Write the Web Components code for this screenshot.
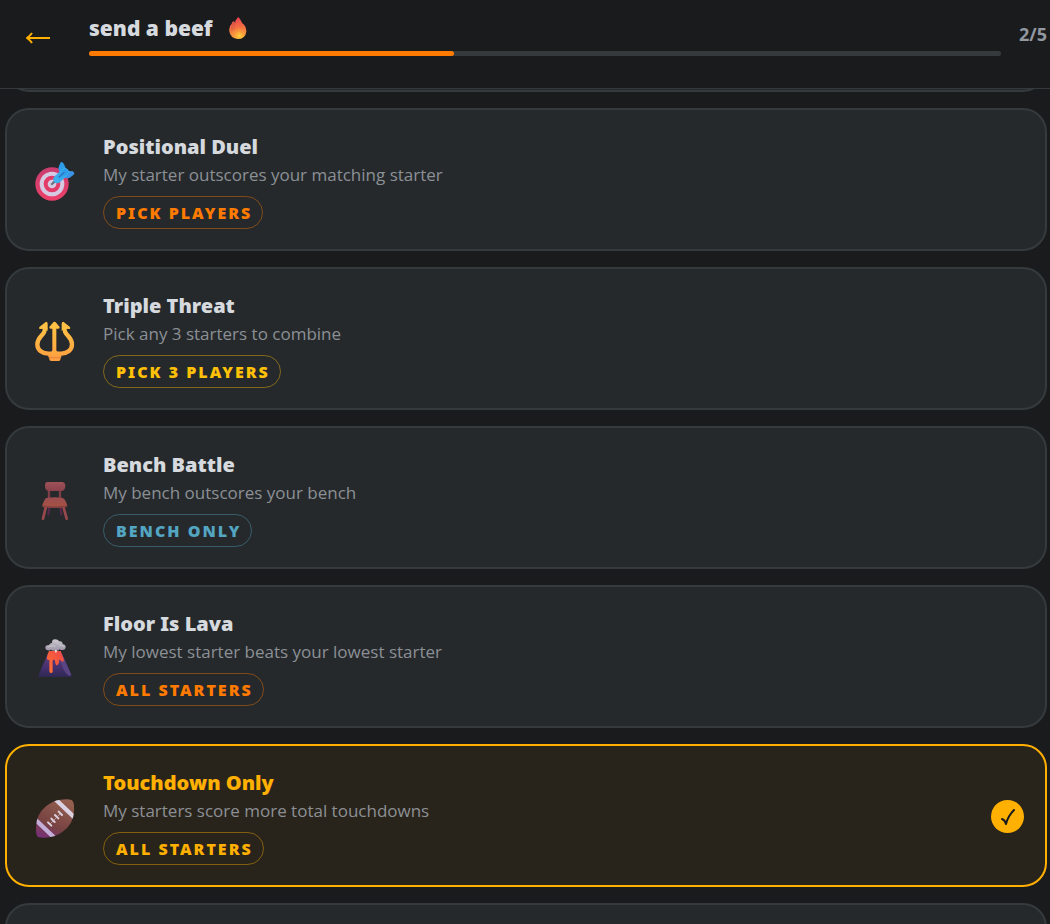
<!DOCTYPE html>
<html lang="en">
<head>
<meta charset="utf-8">
<meta name="viewport" content="width=device-width, initial-scale=1">
<title>send a beef</title>
<style>
	:root {
		--bg: #1a1b1d;
		--surface: #25292c;
		--line: #353b3d;
		--text: #d6dade;
		--muted: #8c9095;
		--orange: #ff7b00;
		--amber: #ffb000;
		--yellow: #ffc107;
		--blue: #53a5c2;
		--heading-font: "Noto Sans", "Open Sans", sans-serif;
	}

	body {
		margin: 0;
		background: var(--bg);
		color: var(--text);
		font-family: "Open Sans", "Noto Sans", sans-serif;
	}
</style>
</head>
<body>
<beef-wizard>
	<step-header slot="header" step="2" total="5">send a beef</step-header>
	<challenge-card></challenge-card>
	<challenge-card icon="target">
		Positional Duel
		<span slot="description">My starter outscores your matching starter</span>
		<tag-pill slot="tag" tone="orange">PICK PLAYERS</tag-pill>
	</challenge-card>
	<challenge-card icon="trident">
		Triple Threat
		<span slot="description">Pick any 3 starters to combine</span>
		<tag-pill slot="tag" tone="yellow">PICK 3 PLAYERS</tag-pill>
	</challenge-card>
	<challenge-card icon="chair">
		Bench Battle
		<span slot="description">My bench outscores your bench</span>
		<tag-pill slot="tag" tone="blue">BENCH ONLY</tag-pill>
	</challenge-card>
	<challenge-card icon="volcano">
		Floor Is Lava
		<span slot="description">My lowest starter beats your lowest starter</span>
		<tag-pill slot="tag" tone="orange">ALL STARTERS</tag-pill>
	</challenge-card>
	<challenge-card icon="football" selected>
		Touchdown Only
		<span slot="description">My starters score more total touchdowns</span>
		<tag-pill slot="tag" tone="amber">ALL STARTERS</tag-pill>
	</challenge-card>
	<challenge-card></challenge-card>
</beef-wizard>

<script>
const ICONS = {
	target: `
		<defs>
			<linearGradient id="dart" x1="0" y1="1" x2="1" y2="0"><stop stop-color="#47b9ef"/><stop offset="1" stop-color="#2594e6"/></linearGradient>
			<linearGradient id="ring" x1="0" y1="0" x2="0" y2="1"><stop stop-color="#c93d70"/><stop offset="1" stop-color="#ed4069"/></linearGradient>
		</defs>
		<circle cx="51" cy="66" r="50" fill="url(#ring)"/>
		<circle cx="51" cy="66" r="37" fill="#d6c9e2"/>
		<circle cx="51" cy="66" r="25" fill="#e23b68"/>
		<circle cx="51" cy="66" r="13" fill="#d6c9e2"/>
		<path d="M51 66L62 56" stroke="#68717f" stroke-width="7" stroke-linecap="round"/>
		<path d="M71 15L77 1Q82-2 87 7L93 20L84 38Q68 30 71 15Z" fill="#2f9de8"/>
		<path d="M86 36L97 26L113 28Q121 32 116 38L104 47Q93 52 82 44Z" fill="#3a93e6"/>
		<path d="M58 45L82 23Q90 17 97 22Q104 30 97 38L74 60Q65 66 59 60Q53 52 58 45Z" fill="url(#dart)" stroke="#3fb0ee" stroke-width="3"/>
		<path d="M73 45L87 32" stroke="#2775bd" stroke-width="4" stroke-linecap="round"/>`,
	trident: `
		<defs><linearGradient id="gold" gradientUnits="userSpaceOnUse" x1="0" y1="0" x2="0" y2="120"><stop stop-color="#ffc846"/><stop offset="1" stop-color="#ff9e3f"/></linearGradient></defs>
		<g fill="none" stroke="url(#gold)" stroke-width="13" stroke-linejoin="round">
			<path d="M29 15C35 43 7 43 7 70C7 88 21 97 39 98H79C97 97 111 88 111 70C111 43 83 43 89 15"/>
			<path d="M58 14V100" stroke-width="12"/>
			<path d="M45 99Q55 94 58 82Q61 94 72 99Z" fill="#ffa842" stroke-width="5"/>
		</g>
		<path d="M33 2Q38 2 38 8V30L31 23L14 24Q10 21 14 17ZM85 2Q80 2 80 8V30L87 23L104 24Q108 21 104 17ZM58 2Q61 2 64 6L74 18Q75 23 70 23H47Q42 23 43 18L53 6Q56 2 58 2Z" fill="#ffc045"/>
		<path d="M40 102H79V108Q76 111 76 116Q75 120 70 120H49Q43 120 43 115Q43 111 40 108Z" fill="#ffa140"/>
		<path d="M42 110H77" stroke="#e78340" stroke-width="3"/>`,
	chair: `
		<defs>
			<linearGradient id="seat" x1="0" y1="0" x2="0" y2="1"><stop stop-color="#9c4c51"/><stop offset="1" stop-color="#a55340"/></linearGradient>
			<linearGradient id="back" x1="0" y1="0" x2="0" y2="1"><stop stop-color="#9e5358"/><stop offset="1" stop-color="#8b414c"/></linearGradient>
		</defs>
		<path d="M43 81L40 104M76 81L79 104" stroke="#55294a" stroke-width="6" stroke-linecap="round"/>
		<path d="M42 28V60M75 28V60" stroke="#7c3f48" stroke-width="7"/>
		<path d="M33 80L24 116M85 80L95 116" stroke="#99494e" stroke-width="8" stroke-linecap="round"/>
		<path d="M36 6H83Q90 7 91 15Q91 29 84 32Q79 34 59 33Q38 34 34 31Q29 25 30 14Q31 7 36 6Z" fill="url(#back)"/>
		<path d="M35 54Q59 50 83 54Q88 55 92 64L97 76Q97 82 88 82Q59 85 30 82Q20 81 22 74L29 59Q31 55 35 54Z" fill="url(#seat)"/>
		<path d="M23 75Q26 80 32 80Q59 82 88 80Q94 80 96 75" fill="none" stroke="#7d3843" stroke-width="3"/>`,
	volcano: `
		<defs>
			<linearGradient id="rock" x1="0" y1="0" x2="0" y2="1"><stop stop-color="#65407d"/><stop offset=".6" stop-color="#45306f"/><stop offset="1" stop-color="#2d2852"/></linearGradient>
			<linearGradient id="lava" x1="0" y1="1" x2="1" y2="0"><stop stop-color="#ff7431"/><stop offset="1" stop-color="#ed4548"/></linearGradient>
			<linearGradient id="smoke" x1="0" y1="0" x2="0" y2="1"><stop stop-color="#c9c6cc"/><stop offset="1" stop-color="#9c95a8"/></linearGradient>
		</defs>
		<path d="M39 43H80L109 107Q112 114 104 114H15Q8 114 12 105Z" fill="url(#rock)"/>
		<path d="M77 67Q84 100 103 111L109 107L84 52Z" fill="#5a4483"/>
		<path d="M42 36H77Q84 53 87 64Q86 69 81 68Q76 64 73 61Q72 78 66 79Q61 79 60 65Q54 57 53 69V98Q52 103 47 102Q43 101 43 96V63Q39 63 36 61Q34 55 42 36Z" fill="url(#lava)"/>
		<path d="M57 30H68L63 43Z" fill="#fff1ec"/>
		<path d="M39 34Q31 34 31 25Q32 18 42 18Q45 12 51 12Q50 1 60 1Q69 1 73 7Q83 6 83 16Q93 17 92 26Q90 34 81 33Q76 34 74 31Q68 37 61 33Q54 38 48 32Q44 35 39 34Z" fill="url(#smoke)"/>
		<path d="M40 24Q52 17 60 23M60 8Q67 8 70 15M74 19Q81 17 86 22" fill="none" stroke="#d5d1d8" stroke-width="4" stroke-linecap="round" opacity=".5"/>`,
	football: `
		<defs>
			<linearGradient id="leather" x1=".7" y1="0" x2=".2" y2="1"><stop stop-color="#95604f"/><stop offset=".65" stop-color="#784342"/><stop offset="1" stop-color="#783077"/></linearGradient>
			<linearGradient id="stripe" x1="1" y1="0" x2="0" y2="1"><stop stop-color="#e6e3e6"/><stop offset="1" stop-color="#b79bd4"/></linearGradient>
			<clipPath id="ball"><path d="M76 5Q101 1 111 7Q119 14 117 40Q116 78 82 102Q57 120 25 119Q10 119 6 114Q2 106 3 88Q4 49 33 25Q52 8 76 5Z"/></clipPath>
		</defs>
		<g clip-path="url(#ball)">
			<rect width="120" height="120" fill="url(#leather)"/>
			<path d="M57 0L123 63M-4 60L64 125" stroke="url(#stripe)" stroke-width="13"/>
		</g>
		<path d="M39 73L49 83M49 62L59 72M60 51L70 61M71 41L81 51" stroke="#ddd2df" stroke-width="6" stroke-linecap="round"/>
		<path d="M45 78L77 46" stroke="#c8b7c8" stroke-width="2"/>`
};

customElements.define('beef-wizard', class extends HTMLElement {
	constructor() {
		super();
		this.attachShadow({ mode: 'open' }).innerHTML = `
			<style>
				:host {
					display: flex;
					flex-direction: column;
					height: 100vh;
				}

				main {
					flex: 1;
					min-height: 0;
					overflow-y: auto;
					scrollbar-width: none;
				}

				.list {
					display: flex;
					flex-direction: column;
					gap: 16px;
					padding: 16px 3px 16px 5px;
				}
			</style>
			<slot name="header"></slot>
			<main><div class="list"><slot></slot></div></main>
		`;
	}
});

customElements.define('step-header', class extends HTMLElement {
	constructor() {
		super();
		this.attachShadow({ mode: 'open' });
	}

	connectedCallback() {
		const
			step = Number(this.getAttribute('step')),
			total = Number(this.getAttribute('total'));
		this.shadowRoot.innerHTML = `
			<style>
				:host {
					display: block;
					border-bottom: 1px solid var(--line);
				}

				header {
					display: flex;
					align-items: center;
					height: 76px;
					padding: 0 3px 12px 16px;
				}

				button {
					display: flex;
					align-items: center;
					justify-content: center;
					width: 44px;
					height: 44px;
					margin-right: 29px;
					padding: 0;
					border: 0;
					background: none;
					color: var(--amber);
					cursor: pointer;
				}

				.progress {
					flex: 1;
					padding-bottom: 8px;
				}

				h1 {
					display: flex;
					align-items: center;
					gap: 16px;
					margin: 0 0 8px;
					font-family: var(--heading-font);
					font-size: 21px;
					font-weight: 900;
					line-height: 30px;
				}

				.track {
					height: 5px;
					border-radius: 3px;
					background: var(--line);
				}

				.fill {
					width: ${step / total * 100}%;
					height: 100%;
					border-radius: 3px;
					background: var(--orange);
				}

				.count {
					margin-left: 18px;
					padding-bottom: 8px;
					color: #9297a0;
					font-size: 18px;
					font-weight: 700;
					line-height: 24px;
				}
			</style>
			<header>
				<button type="button" aria-label="Back">
					<svg width="24" height="12" viewBox="0 0 24 12" fill="none" stroke="currentColor" stroke-width="2"><path d="M1 6H24M6 1Q4 4 1 6Q4 8 6 11"/></svg>
				</button>
				<div class="progress">
					<h1>
						<slot></slot>
						<svg width="18" height="22" viewBox="0 0 54 66" aria-hidden="true">
							<defs>
								<linearGradient id="outer" x1=".5" y1="0" x2=".6" y2="1"><stop stop-color="#ed4052"/><stop offset=".55" stop-color="#f47740"/><stop offset="1" stop-color="#f9a33d"/></linearGradient>
								<radialGradient id="inner" cx=".55" cy=".8" r=".6"><stop stop-color="#ffd43a"/><stop offset="1" stop-color="#ff9238" stop-opacity="0"/></radialGradient>
							</defs>
							<path d="M28 0Q34 6 38 15Q40 20 44 22Q53 31 52 44Q49 65 27 66Q4 65 1 43Q-1 28 8 20Q9 14 14 13Q17 14 18 18Q20 6 28 0Z" fill="url(#outer)"/>
							<path d="M14 14Q7 27 9 42M20 14Q13 27 15 38" fill="none" stroke="#c65145" stroke-width="2"/>
							<ellipse cx="29" cy="43" rx="22" ry="23" fill="url(#inner)"/>
						</svg>
					</h1>
					<div class="track" role="progressbar" aria-label="Step" aria-valuenow="${step}" aria-valuemax="${total}"><div class="fill"></div></div>
				</div>
				<span class="count">${step}/${total}</span>
			</header>
		`;
	}
});

customElements.define('tag-pill', class extends HTMLElement {
	constructor() {
		super();
		this.attachShadow({ mode: 'open' }).innerHTML = `
			<style>
				:host {
					display: inline-block;
					box-sizing: border-box;
					height: 33px;
					padding: 1px 10px 0 12px;
					border: 1px solid color-mix(in srgb, currentColor 42%, transparent);
					border-radius: 17px;
					font-family: var(--heading-font);
					font-size: 16px;
					font-weight: 900;
					letter-spacing: 2px;
					line-height: 31px;
					white-space: nowrap;
				}
			</style>
			<slot></slot>
		`;
	}

	connectedCallback() {
		this.style.color = `var(--${this.getAttribute('tone')})`;
	}
});

customElements.define('challenge-card', class extends HTMLElement {
	constructor() {
		super();
		this.attachShadow({ mode: 'open' });
	}

	connectedCallback() {
		const
			icon = ICONS[this.getAttribute('icon')] || '',
			selected = this.hasAttribute('selected');
		this.shadowRoot.innerHTML = `
			<style>
				:host {
					display: block;
					flex: none;
					scroll-margin-bottom: 37px;
				}

				button {
					display: flex;
					align-items: center;
					gap: 28px;
					box-sizing: border-box;
					width: 100%;
					min-height: 143px;
					padding: 22px 21px 20px 28px;
					border: 2px solid var(--line);
					border-radius: 24px;
					background: var(--surface);
					color: var(--text);
					font: inherit;
					text-align: left;
					cursor: pointer;
				}

				:host([selected]) button {
					border-color: var(--amber);
					background: #29241b;
				}

				:host([selected]) .title {
					color: var(--amber);
				}

				.icon {
					flex: none;
					padding-top: 2px;
				}

				.body {
					flex: 1;
				}

				.title,
				.description {
					display: block;
				}

				.title {
					font-family: var(--heading-font);
					font-size: 20px;
					font-weight: 900;
					line-height: 29px;
				}

				.description {
					margin-bottom: 8px;
					color: var(--muted);
					font-size: 17px;
					line-height: 27px;
				}

				slot[name="tag"] {
					display: flex;
				}

				.check {
					display: flex;
					align-items: center;
					justify-content: center;
					width: 33px;
					height: 33px;
					border-radius: 50%;
					background: var(--amber);
				}

				svg {
					display: block;
				}
			</style>
			<button type="button" aria-pressed="${selected}">
				<svg class="icon" width="40" height="40" viewBox="0 0 120 120" aria-hidden="true">${icon}</svg>
				<span class="body">
					<span class="title"><slot></slot></span>
					<span class="description"><slot name="description"></slot></span>
					<slot name="tag"></slot>
				</span>
				${selected ? `<span class="check"><svg width="14" height="16" viewBox="0 0 14 16" fill="none" stroke="#1a1b1d" stroke-width="2" stroke-linecap="round" stroke-linejoin="round"><path d="M1 10Q4 11 5 15Q7 7 13 1"/></svg></span>` : ''}
			</button>
		`;
	}
});

// Open the list at the chosen challenge
document.querySelector('challenge-card[selected]').scrollIntoView({ block: 'end' });
</script>
</body>
</html>
